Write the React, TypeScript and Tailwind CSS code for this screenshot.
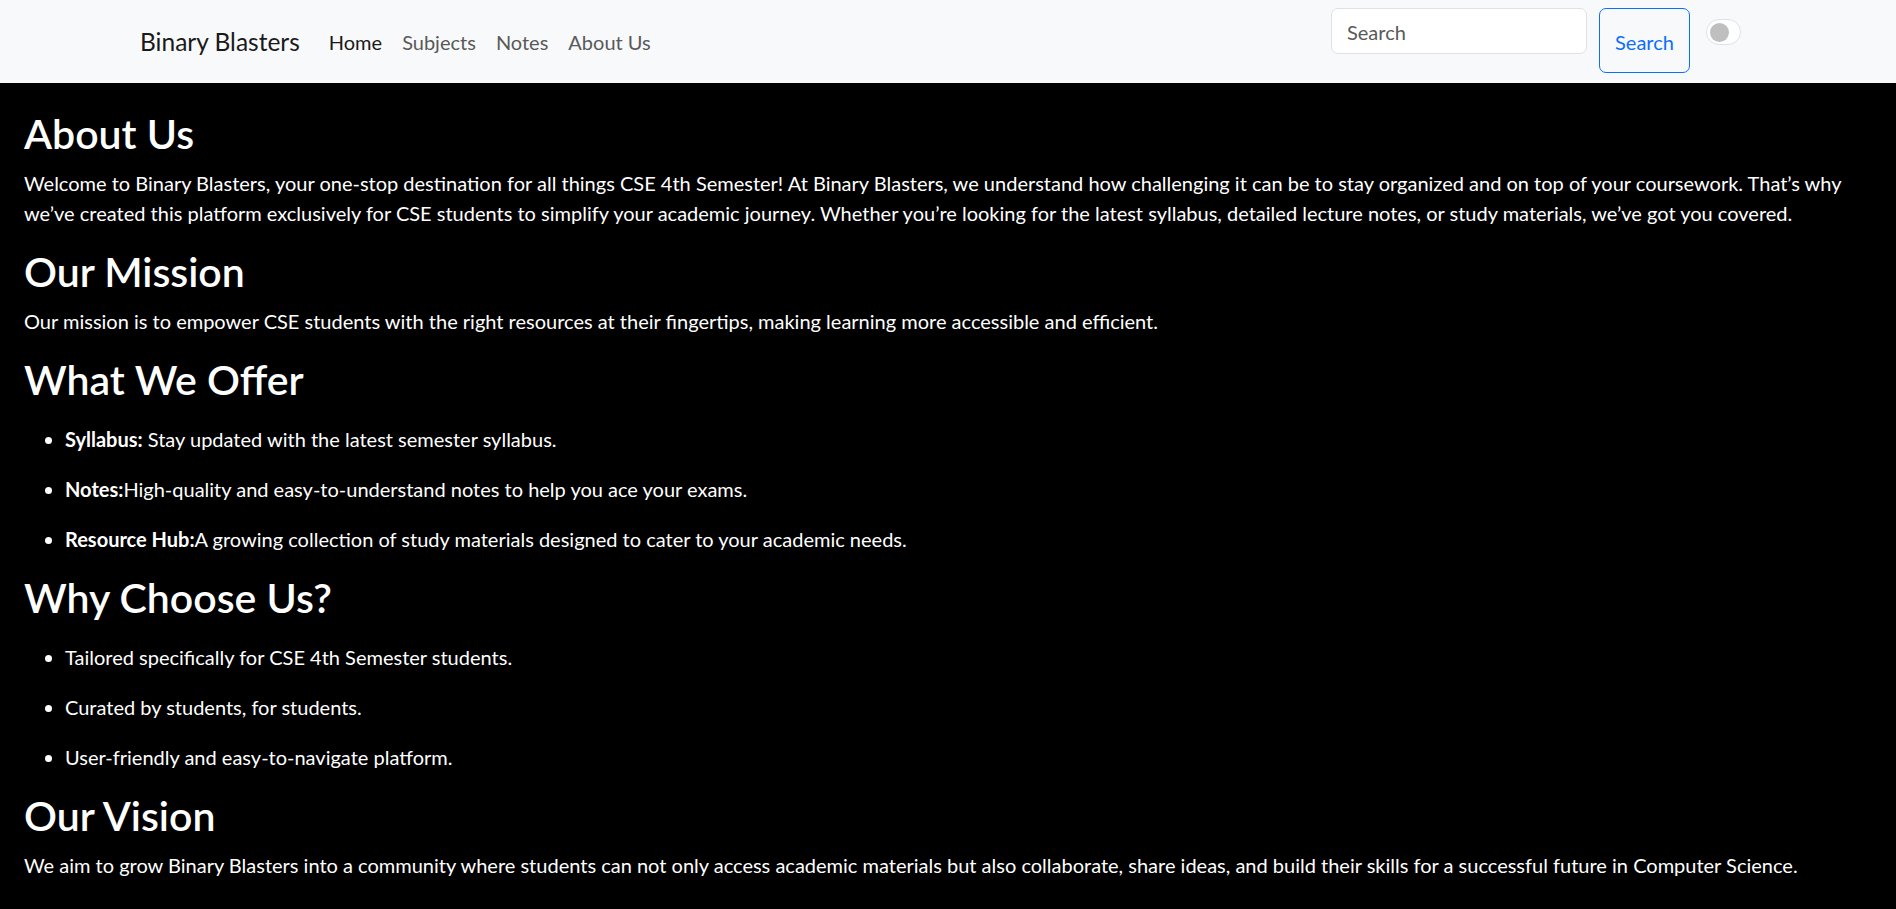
import React from "react";

const offers = [
  { title: "Syllabus:", text: " Stay updated with the latest semester syllabus." },
  { title: "Notes:", text: "High-quality and easy-to-understand notes to help you ace your exams." },
  { title: "Resource Hub:", text: "A growing collection of study materials designed to cater to your academic needs." },
];

const reasons = [
  "Tailored specifically for CSE 4th Semester students.",
  "Curated by students, for students.",
  "User-friendly and easy-to-navigate platform.",
];

const Heading = ({ children }: { children: React.ReactNode }) => (
  <h2 className="text-[41px] leading-[48px] font-semibold mb-[10px]">{children}</h2>
);

const App: React.FC = () => {
  return (
    <div className="min-h-screen bg-black font-['Lato','Liberation_Sans',sans-serif] text-[20px] leading-[30px] text-white">
      {/* navbar */}
      <nav className="h-[83px] bg-[#f8f9fa] flex items-center pl-[140px] pr-[155px]">
        <span className="text-[24.5px] text-[#1a1a1a] mr-[29px]">Binary Blasters</span>
        <div className="flex items-center gap-[20px] text-[20px]">
          <a className="text-[#1a1a1a]">Home</a>
          <a className="text-[#595959]">Subjects</a>
          <a className="text-[#595959]">Notes</a>
          <a className="text-[#595959]">About Us</a>
        </div>
        <div className="ml-auto flex items-start self-start pt-[8px]">
          <input
            placeholder="Search"
            className="w-[256px] h-[46px] rounded-[7px] border border-[#dee2e6] bg-white px-[15px] pt-[2px] text-[20px] text-[#212529] placeholder:text-[#595959] outline-none"
          />
          <button className="ml-[12px] w-[91px] h-[65px] rounded-[7px] border border-[#0d6efd] text-[#0d6efd] text-[20px] pt-[3px]">
            Search
          </button>
          <div className="ml-[16px] mt-[11px] w-[35px] h-[26px] rounded-full border border-[#dee2e6] bg-white flex items-center pl-[3px]">
            <div className="w-[19px] h-[19px] rounded-full bg-[#bfbfbf]" />
          </div>
        </div>
      </nav>

      <main className="px-[24px] pt-[27px]">
        <Heading>About Us</Heading>
        <p className="mb-[20px]">
          Welcome to Binary Blasters, your one-stop destination for all things CSE 4th Semester! At Binary Blasters, we
          understand how challenging it can be to stay organized and on top of your coursework. That’s why we’ve created
          this platform exclusively for CSE students to simplify your academic journey. Whether you’re looking for the
          latest syllabus, detailed lecture notes, or study materials, we’ve got you covered.
        </p>

        <Heading>Our Mission</Heading>
        <p className="mb-[20px]">
          Our mission is to empower CSE students with the right resources at their fingertips, making learning more
          accessible and efficient.
        </p>

        <Heading>What We Offer</Heading>
        <ul className="list-disc pl-[41px] pt-[10px] mb-[20px] flex flex-col gap-[20px]">
          {offers.map((o) => (
            <li key={o.title}>
              <strong className="font-bold">{o.title}</strong>
              {o.text}
            </li>
          ))}
        </ul>

        <Heading>Why Choose Us?</Heading>
        <ul className="list-disc pl-[41px] pt-[10px] mb-[20px] flex flex-col gap-[20px]">
          {reasons.map((r) => (
            <li key={r}>{r}</li>
          ))}
        </ul>

        <Heading>Our Vision</Heading>
        <p className="mb-[20px]">
          We aim to grow Binary Blasters into a community where students can not only access academic materials but also
          collaborate, share ideas, and build their skills for a successful future in Computer Science.
        </p>
      </main>
    </div>
  );
};

export default App;
